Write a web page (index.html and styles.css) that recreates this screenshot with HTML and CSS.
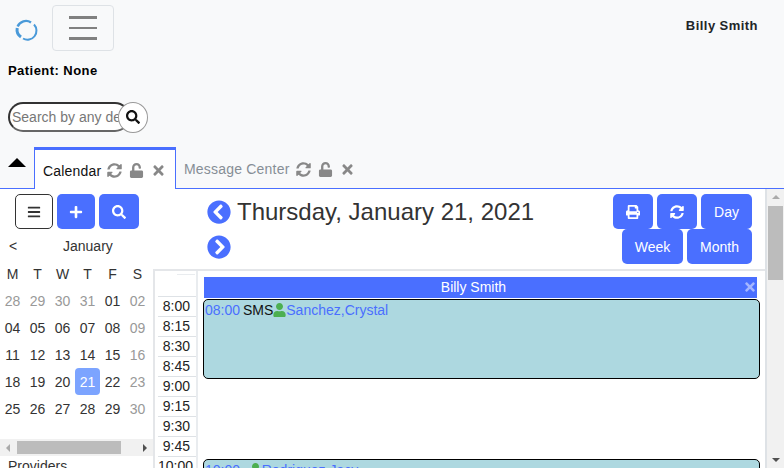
FILE: index.html
```html
<!DOCTYPE html>
<html lang="en">
<head>
  <meta charset="UTF-8">
  <title>Calendar</title>
  <link rel="stylesheet" href="styles.css">
</head>
<body>

<svg class="defs" xmlns="http://www.w3.org/2000/svg">
  <symbol id="i-search" viewBox="0 0 512 512"><path fill="currentColor" d="M505 442.7L405.3 343c-4.5-4.5-10.6-7-17-7H372c27.6-35.3 44-79.7 44-128C416 93.1 322.9 0 208 0S0 93.1 0 208s93.1 208 208 208c48.3 0 92.7-16.4 128-44v16.3c0 6.4 2.5 12.5 7 17l99.7 99.7c9.4 9.4 24.6 9.4 33.9 0l28.3-28.3c9.4-9.4 9.4-24.6.1-34zM208 336c-70.7 0-128-57.2-128-128 0-70.7 57.2-128 128-128 70.7 0 128 57.2 128 128 0 70.7-57.2 128-128 128z"/></symbol>
  <symbol id="i-times" viewBox="0 0 352 512"><path fill="currentColor" d="M242.72 256l100.07-100.07c12.28-12.28 12.28-32.19 0-44.48l-22.24-22.24c-12.28-12.28-32.19-12.28-44.48 0L176 189.28 75.93 89.21c-12.28-12.28-32.19-12.28-44.48 0L9.21 111.45c-12.28 12.28-12.28 32.19 0 44.48L109.28 256 9.21 356.07c-12.28 12.28-12.28 32.19 0 44.48l22.24 22.24c12.28 12.28 32.2 12.28 44.48 0L176 322.72l100.07 100.07c12.28 12.28 32.2 12.28 44.48 0l22.24-22.24c12.28-12.28 12.28-32.19 0-44.48L242.72 256z"/></symbol>
  <symbol id="i-plus" viewBox="0 0 448 512"><path fill="currentColor" d="M416 208H272V64c0-17.67-14.33-32-32-32h-32c-17.67 0-32 14.33-32 32v144H32c-17.67 0-32 14.33-32 32v32c0 17.67 14.33 32 32 32h144v144c0 17.67 14.33 32 32 32h32c17.67 0 32-14.33 32-32V304h144c17.67 0 32-14.33 32-32v-32c0-17.67-14.33-32-32-32z"/></symbol>
  <symbol id="i-bars" viewBox="0 0 448 512"><path fill="currentColor" d="M16 132h416c8.837 0 16-7.163 16-16V76c0-8.837-7.163-16-16-16H16C7.163 60 0 67.163 0 76v40c0 8.837 7.163 16 16 16zm0 160h416c8.837 0 16-7.163 16-16v-40c0-8.837-7.163-16-16-16H16c-8.837 0-16 7.163-16 16v40c0 8.837 7.163 16 16 16zm0 160h416c8.837 0 16-7.163 16-16v-40c0-8.837-7.163-16-16-16H16c-8.837 0-16 7.163-16 16v40c0 8.837 7.163 16 16 16z"/></symbol>
  <symbol id="i-user" viewBox="0 0 448 512"><path fill="currentColor" d="M224 256c70.7 0 128-57.3 128-128S294.7 0 224 0 96 57.3 96 128s57.3 128 128 128zm89.6 32h-16.7c-22.2 10.2-46.9 16-72.9 16s-50.6-5.8-72.9-16h-16.7C60.2 288 0 348.2 0 422.4V464c0 26.5 21.5 48 48 48h352c26.5 0 48-21.5 48-48v-41.6c0-74.2-60.2-134.4-134.4-134.4z"/></symbol>
  <symbol id="i-sync" viewBox="0 0 512 512"><path fill="currentColor" d="M370.72 133.28C339.458 104.008 298.888 87.962 255.848 88c-77.458.068-144.328 53.178-162.791 126.85-1.344 5.363-6.122 9.15-11.651 9.15H24.103c-7.498 0-13.194-6.807-11.807-14.176C33.933 94.924 134.813 8 256 8c66.448 0 126.791 26.136 171.315 68.685L463.03 40.97C478.149 25.851 504 36.559 504 57.941V192c0 13.255-10.745 24-24 24H345.941c-21.382 0-32.09-25.851-16.971-40.971l41.75-41.749zM32 296h134.059c21.382 0 32.09 25.851 16.971 40.971l-41.75 41.75c31.262 29.273 71.835 45.319 114.876 45.28 77.418-.07 144.315-53.144 162.787-126.849 1.344-5.363 6.122-9.15 11.651-9.15h57.304c7.498 0 13.194 6.807 11.807 14.176C478.067 417.076 377.187 504 256 504c-66.448 0-126.791-26.136-171.315-68.685L48.97 471.03C33.851 486.149 8 475.441 8 454.059V320c0-13.255 10.745-24 24-24z"/></symbol>
  <symbol id="i-unlock" viewBox="0 0 448 512"><path fill="currentColor" d="M400 256H152V152.9c0-39.6 31.7-72.5 71.3-72.9 40-.4 72.7 32.1 72.7 72v16c0 13.3 10.7 24 24 24h32c13.3 0 24-10.7 24-24v-16C376 68 307.5-.3 223.5 0 139.5.3 72 69.5 72 153.5V256H48c-26.5 0-48 21.5-48 48v160c0 26.5 21.5 48 48 48h352c26.5 0 48-21.5 48-48V304c0-26.5-21.5-48-48-48z"/></symbol>
  <symbol id="i-print" viewBox="0 0 512 512"><path fill="currentColor" d="M448 192V77.25c0-8.49-3.37-16.62-9.37-22.63L393.37 9.37c-6-6-14.14-9.37-22.63-9.37H96C78.33 0 64 14.33 64 32v160c-35.35 0-64 28.65-64 64v112c0 8.84 7.16 16 16 16h48v96c0 17.67 14.33 32 32 32h320c17.67 0 32-14.33 32-32v-96h48c8.84 0 16-7.16 16-16V256c0-35.35-28.65-64-64-64zm-64 256H128v-96h256v96zm0-224H128V64h192v48c0 8.84 7.16 16 16 16h48v96zm48 72c-13.25 0-24-10.75-24-24 0-13.26 10.75-24 24-24s24 10.74 24 24c0 13.25-10.75 24-24 24z"/></symbol>
  <symbol id="i-left" viewBox="0 0 512 512"><path fill="currentColor" d="M256 504C119 504 8 393 8 256S119 8 256 8s248 111 248 248-111 248-248 248zM142.1 273l135.5 135.5c9.4 9.4 24.6 9.4 33.9 0l17-17c9.4-9.4 9.4-24.6 0-33.9L226.9 256l101.6-101.6c9.4-9.4 9.4-24.6 0-33.9l-17-17c-9.4-9.4-24.6-9.4-33.9 0L142.1 239c-9.4 9.4-9.4 24.6 0 34z"/></symbol>
  <symbol id="i-right" viewBox="0 0 512 512"><path fill="currentColor" d="M256 8c137 0 248 111 248 248S393 504 256 504 8 393 8 256 119 8 256 8zm113.9 231L234.4 103.5c-9.4-9.4-24.6-9.4-33.9 0l-17 17c-9.4 9.4-9.4 24.6 0 33.9L285.1 256 183.5 357.6c-9.4 9.4-9.4 24.6 0 33.9l17 17c9.4 9.4 24.6 9.4 33.9 0L369.9 273c9.4-9.4 9.4-24.6 0-34z"/></symbol>
</svg>

<div class="top">
  <svg class="logo" viewBox="0 0 24 24">
    <path d="M3.6 8.5A9 9 0 0 1 17 4.5" fill="none" stroke="#4a9ad9" stroke-width="2.4"/>
    <path d="M20 6.5A9 9 0 0 1 9 20.5" fill="none" stroke="#4a9ad9" stroke-width="2"/>
    <path d="M3.2 10A9 9 0 0 0 7 19" fill="none" stroke="#4a9ad9" stroke-width="3"/>
  </svg>
  <button class="menuBtn"><span></span><span></span><span></span></button>
  <div class="userName">Billy Smith</div>
</div>

<div class="patient">Patient: None</div>

<div class="searchRow">
  <input class="searchInput" type="text" placeholder="Search by any demographic">
  <button class="searchBtn"><svg class="ic"><use href="#i-search"/></svg></button>
</div>

<div class="tabs">
  <div class="caret"></div>
  <div class="tab active">
    <span>Calendar</span>
    <svg class="ic"><use href="#i-sync"/></svg>
    <svg class="ic"><use href="#i-unlock"/></svg>
    <svg class="ic x"><use href="#i-times"/></svg>
  </div>
  <div class="tab">
    <span>Message Center</span>
    <svg class="ic"><use href="#i-sync"/></svg>
    <svg class="ic"><use href="#i-unlock"/></svg>
    <svg class="ic x"><use href="#i-times"/></svg>
  </div>
</div>

<div class="main">
  <div class="side">
    <div class="sideInner">
      <div class="sideBtns">
        <button class="btn outline"><svg class="ic"><use href="#i-bars"/></svg></button>
        <button class="btn"><svg class="ic"><use href="#i-plus"/></svg></button>
        <button class="btn wide"><svg class="ic"><use href="#i-search"/></svg></button>
      </div>
      <div class="monthRow"><span class="prev">&lt;</span><span class="monthName">January</span></div>
      <div class="cal" id="cal">
        <b>M</b><b>T</b><b>W</b><b>T</b><b>F</b><b>S</b>
        <i>28</i><i>29</i><i>30</i><i>31</i><span>01</span><i>02</i>
        <span>04</span><span>05</span><span>06</span><span>07</span><span>08</span><i>09</i>
        <span>11</span><span>12</span><span>13</span><span>14</span><span>15</span><i>16</i>
        <span>18</span><span>19</span><span>20</span><span class="today">21</span><span>22</span><i>23</i>
        <span>25</span><span>26</span><span>27</span><span>28</span><span>29</span><i>30</i>
      </div>
    </div>
    <div class="hbar">
      <div class="arrow left"></div>
      <div class="hthumb"></div>
      <div class="arrow right"></div>
    </div>
    <div class="providers">Providers</div>
  </div>

  <div class="content">
    <div class="calHead">
      <div class="titleBox">
        <svg class="nav"><use href="#i-left"/></svg>
        <span class="title">Thursday, January 21, 2021</span>
        <svg class="nav"><use href="#i-right"/></svg>
      </div>
      <div class="viewBtns">
        <button class="btn"><svg class="ic"><use href="#i-print"/></svg></button>
        <button class="btn"><svg class="ic"><use href="#i-sync"/></svg></button>
        <button class="btn txt">Day</button>
        <button class="btn txt">Week</button>
        <button class="btn txt">Month</button>
      </div>
    </div>
    <div class="grid">
      <div class="times">
        <div class="timesTop"><span></span></div>
        <div class="t">8:00</div>
        <div class="t">8:15</div>
        <div class="t">8:30</div>
        <div class="t">8:45</div>
        <div class="t">9:00</div>
        <div class="t">9:15</div>
        <div class="t">9:30</div>
        <div class="t">9:45</div>
        <div class="t">10:00</div>
      </div>
      <div class="column">
        <div class="colHead">Billy Smith<svg class="ic"><use href="#i-times"/></svg></div>
        <div class="appt">
          <span class="blue">08:00</span> SMS<svg class="ic person"><use href="#i-user"/></svg><span class="blue">Sanchez,Crystal</span>
        </div>
        <div class="appt second">
          <span class="blue">10:00</span> &nbsp;&nbsp;<svg class="ic person"><use href="#i-user"/></svg><span class="blue">Rodriguez,Jacy</span>
        </div>
      </div>
    </div>
  </div>

  <div class="vbar">
    <div class="arrow up"></div>
    <div class="vthumb"></div>
    <div class="arrow down"></div>
  </div>
</div>

</body>
</html>
```

FILE: styles.css
```css
* { box-sizing: border-box; }
html, body { height: 100%; }
body {
  margin: 0;
  height: 468px;
  overflow: hidden;
  background: #f8f9fa;
  color: #212529;
  font-family: "Liberation Sans", Arial, sans-serif;
  font-size: 14px;
}
button { font-family: inherit; padding: 0; }
.defs { display: none; }
.ic { display: block; width: 14px; height: 14px; }

.top {
  display: flex;
  align-items: flex-start;
  height: 63px;
  padding: 5px 26px 0 14px;
}
.logo { width: 24px; height: 24px; margin-top: 13px; }
.menuBtn {
  display: flex;
  flex-direction: column;
  justify-content: center;
  gap: 8px;
  width: 62px;
  height: 46px;
  margin-left: 14px;
  padding: 0 16px;
  background: transparent;
  border: 1px solid #dee2e6;
  border-radius: 4px;
}
.menuBtn span { display: block; height: 2.5px; background: #808080; }
.userName { margin-left: auto; margin-top: 13px; font-size: 13px; font-weight: bold; letter-spacing: .45px; }

.patient { height: 16px; line-height: 16px; padding-left: 8px; font-size: 13px; font-weight: bold; color: #000; letter-spacing: .45px; }

.searchRow { display: flex; align-items: center; height: 32px; margin-top: 22px; padding-left: 8px; }
.searchInput {
  width: 122px;
  height: 30px;
  padding: 0 2px;
  border: 2px solid #333;
  border-bottom-color: #666;
  border-radius: 15px;
  font-family: inherit;
  font-size: 14px;
  outline: none;
}
.searchInput::placeholder { color: #777; }
.searchBtn {
  display: flex;
  align-items: center;
  justify-content: center;
  width: 30px;
  height: 31px;
  margin-left: -12px;
  background: #fff;
  border: 1px solid #999;
  border-radius: 50%;
  color: #111;
}

.tabs {
  display: flex;
  align-items: flex-end;
  height: 42px;
  margin-top: 14px;
  border-bottom: 1px solid #4a6fff;
}
.caret {
  width: 0;
  height: 0;
  margin: 0 8px 21px 8px;
  border-left: 9px solid transparent;
  border-right: 9px solid transparent;
  border-bottom: 9px solid #000;
}
.tab {
  display: flex;
  align-items: center;
  height: 41px;
  padding: 3px 9px 0 8px;
  color: #868e96;
  letter-spacing: .2px;
}
.tab .ic { width: 15px; height: 15px; margin-left: 6px; color: #888; }
.tab .x { width: 11px; margin-left: 8px; }
.tab.active {
  width: 142px;
  height: 42px;
  margin-bottom: -1px;
  padding-bottom: 1px;
  background: #fff;
  border: 1px solid #4a6fff;
  border-top: 3px solid #4a6fff;
  border-bottom: 0;
  color: #111;
}
.tab.active .ic { margin-left: 6px; }
.tab.active .ic + .ic { margin-left: 7px; }
.tab .ic + .ic { margin-left: 7px; }
.tab .ic + .ic + .x { margin-left: 9px; }

.main { display: flex; height: 279px; background: #fff; }

.side { display: flex; flex-direction: column; width: 153px; height: 279px; overflow: hidden; }
.sideInner { flex: none; height: 250px; }
.sideBtns { display: flex; gap: 4px; padding: 5px 0 0 15px; }
.btn {
  display: flex;
  align-items: center;
  justify-content: center;
  width: 40px;
  height: 35px;
  background: #4a6fff;
  border: 0;
  border-radius: 5px;
  color: #fff;
  font-size: 14px;
}
.sideBtns .btn { width: 38px; }
.sideBtns .wide { width: 40px; }
.btn.outline { background: #fff; border: 1px solid #333; color: #333; }
.monthRow { display: flex; height: 31px; align-items: flex-start; padding: 9px 0 0 9px; font-size: 14px; line-height: 16px; color: #333; }
.prev { width: 54px; }
.cal { display: grid; grid-template-columns: repeat(6, 25px); grid-auto-rows: 27px; font-size: 14px; }
.cal b, .cal i, .cal span { display: flex; align-items: center; justify-content: center; font-weight: normal; font-style: normal; }
.cal b { color: #333; font-size: 14px; }
.cal span { color: #333; }
.cal i { color: #999; }
.cal .today { background: #7ca4ff; color: #fff; border-radius: 4px; }

.hbar { display: flex; align-items: center; flex: none; height: 17px; padding: 0 6px; background: #f1f1f1; }
.hthumb { width: 104px; height: 13px; margin-left: 7px; background: #bcbcbc; }
.arrow { width: 0; height: 0; border: 4px solid transparent; }
.arrow.left { border-left: 0; border-right-color: #aaa; }
.arrow.right { margin-left: auto; border-right: 0; border-left-color: #505050; }
.providers { padding: 2px 0 0 8px; font-size: 14px; color: #333; }

.content { display: flex; flex-direction: column; flex: 1; min-width: 0; border-right: 2px solid #dee2e6; }
.calHead { display: flex; justify-content: space-between; flex: none; height: 80px; padding: 5px 13px 0 54px; }
.titleBox { display: flex; flex-wrap: wrap; align-items: center; align-content: flex-start; width: 340px; }
.nav { width: 24px; height: 24px; color: #4a6fff; }
.titleBox .nav { margin: 5px 0; }
.titleBox .nav + .title + .nav { margin-top: 5px; }
.title { width: 310px; margin-left: 6px; font-size: 24px; color: #333; line-height: 36px; }
.viewBtns { display: flex; flex-wrap: wrap; justify-content: flex-end; align-content: flex-start; gap: 0 4px; width: 145px; }
.btn.txt { font-size: 14px; font-weight: normal; }
.viewBtns .txt:nth-child(3) { width: 51px; }
.viewBtns .txt:nth-child(4) { width: 61px; }
.viewBtns .txt:nth-child(5) { width: 65px; }

.grid { display: flex; flex: 1; min-height: 0; overflow: hidden; border-top: 2px solid #e4e6e9; border-left: 2px solid #e4e6e9; }
.times { flex: none; width: 43px; border-right: 2px solid #e9ecef; }
.timesTop { height: 25px; padding: 3px 1px 0 22px; }
.timesTop span { display: block; height: 1px; background: #e9ecef; }
.t { height: 20px; padding-right: 6px; border-top: 1px solid #dee2e6; line-height: 18px; text-align: right; font-size: 14px; color: #222; }
.times .t { width: 38px; margin-left: 3px; }
.column { flex: 1; min-width: 0; padding: 6px 5px 0 5px; }
.colHead {
  position: relative;
  height: 21px;
  margin: 0 3px 1px 1px;
  padding-right: 14px;
  background: #4a6fff;
  color: #fff;
  text-align: center;
  line-height: 20px;
}
.colHead .ic { position: absolute; right: 2px; top: 3px; width: 10px; color: #a5b6ff; }
.appt {
  display: flex;
  height: 80px;
  padding: 2px 1px;
  background: #add8e0;
  border: 1px solid #000;
  border-radius: 5px;
  white-space: pre;
  word-spacing: -1px;
  color: #111;
}
.appt.second { margin-top: 80px; }
.blue { color: #4a6fff; }
.person { width: 13px; height: 14px; margin: 1px 0 0; color: #4caf50; }

.vbar { display: flex; flex-direction: column; align-items: center; flex: none; width: 17px; background: #f1f1f1; }
.vthumb { width: 15px; height: 74px; margin-top: 7px; background: #bcbcbc; }
.arrow.up { margin-top: 6px; border-top: 0; border-bottom-color: #aaa; }
.arrow.down { margin-top: auto; margin-bottom: 6px; border-bottom: 0; border-top-color: #505050; }
```
